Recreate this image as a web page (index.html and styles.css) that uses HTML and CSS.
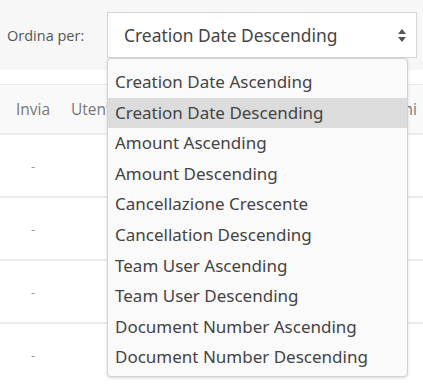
FILE: index.html
```html
<!DOCTYPE html>
<html lang="it">
<head>
    <meta charset="UTF-8">
    <meta name="viewport" content="width=device-width, initial-scale=1.0">
    <title>Ordina</title>
    <link rel="stylesheet" href="styles.css">
</head>
<body>
<div class="toolbar">
    <label class="sort-label">Ordina per:</label>
    <div class="sort-select">
        <span class="sort-value">Creation Date Descending</span>
        <svg class="sort-arrows" width="8" height="13" viewBox="0 0 8 13">
            <path d="M4 0 L8 5 H0 Z" fill="#555"/>
            <path d="M4 13 L8 8 H0 Z" fill="#555"/>
        </svg>
        <ul class="sort-menu">
            <li>Creation Date Ascending</li>
            <li class="active">Creation Date Descending</li>
            <li>Amount Ascending</li>
            <li>Amount Descending</li>
            <li>Cancellazione Crescente</li>
            <li>Cancellation Descending</li>
            <li>Team User Ascending</li>
            <li>Team User Descending</li>
            <li>Document Number Ascending</li>
            <li>Document Number Descending</li>
        </ul>
    </div>
</div>

<div class="table">
    <div class="row head">
        <div class="cell c-send">Invia</div>
        <div class="cell c-user">Utente</div>
        <div class="cell c-amount">Importo</div>
        <div class="cell c-actions">Azioni</div>
    </div>
    <div class="row">
        <div class="cell c-send">-</div>
        <div class="cell c-user"></div>
        <div class="cell c-amount"></div>
        <div class="cell c-actions"></div>
    </div>
    <div class="row">
        <div class="cell c-send">-</div>
        <div class="cell c-user"></div>
        <div class="cell c-amount"></div>
        <div class="cell c-actions"></div>
    </div>
    <div class="row">
        <div class="cell c-send">-</div>
        <div class="cell c-user"></div>
        <div class="cell c-amount"></div>
        <div class="cell c-actions"></div>
    </div>
    <div class="row">
        <div class="cell c-send">-</div>
        <div class="cell c-user"></div>
        <div class="cell c-amount"></div>
        <div class="cell c-actions"></div>
    </div>
</div>
</body>
</html>
```

FILE: styles.css
```css
* {
    margin: 0;
    padding: 0;
    box-sizing: border-box;
}

body {
    font-family: 'Open Sans', sans-serif;
    background-color: #fff;
    color: #555;
    width: 423px;
    height: 385px;
    overflow: hidden;
}

.toolbar {
    display: flex;
    align-items: center;
    height: 70px;
    padding: 0 6px 0 7px;
    background-color: #f7f7f7;
}

.sort-label {
    width: 100px;
    font-size: 14.5px;
    color: #555;
}

.sort-select {
    position: relative;
    flex: 1;
    height: 46px;
    display: flex;
    align-items: center;
    justify-content: space-between;
    padding: 0 10px 0 16px;
    background-color: #fff;
    border: 1px solid #d6d6d6;
}

.sort-value {
    font-family: 'Noto Sans', sans-serif;
    font-size: 17.4px;
    color: #444;
}

.sort-menu {
    position: absolute;
    top: 45px;
    left: -1px;
    width: 301px;
    list-style: none;
    padding: 8px 0 3px;
    background-color: #fafafa;
    border: 1px solid #d2d2d2;
    border-radius: 4px;
    box-shadow: 0 1px 3px rgba(0, 0, 0, 0.15);
    z-index: 2;
}

.sort-menu li {
    height: 30.6px;
    line-height: 30.6px;
    padding-left: 7px;
    font-family: 'Noto Sans', sans-serif;
    font-size: 17px;
    color: #444;
    white-space: nowrap;
}

.sort-menu li.active {
    background-color: #dcdcdc;
}

.table {
    margin-top: 14px;
    border-top: 1px solid #e8e8e8;
}

.row {
    display: flex;
    height: 63px;
    border-bottom: 2px solid #ececec;
}

.row.head {
    height: 50px;
    background-color: #f9f9f9;
}

.cell {
    display: flex;
    align-items: center;
    font-size: 13px;
    color: #999;
}

.head .cell {
    font-size: 15.5px;
    color: #777;
}

.c-send {
    width: 66px;
    justify-content: center;
}

.c-user {
    width: 120px;
    padding-left: 5px;
}

.c-amount {
    width: 150px;
}

.c-actions {
    flex: 1;
    justify-content: flex-end;
    padding-right: 6px;
}
```
